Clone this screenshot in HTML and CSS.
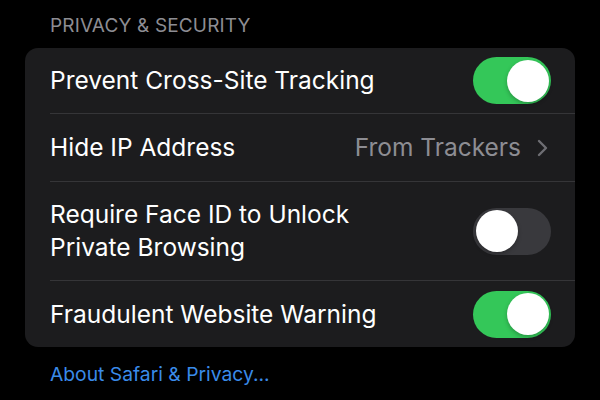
FILE: index.html
```html
<!DOCTYPE html>
<html>
<head>
<meta charset="utf-8">
<link rel="stylesheet" href="styles.css">
</head>
<body>
<div class="page">
  <div class="section-title">PRIVACY &amp; SECURITY</div>
  <div class="card">
    <div class="row first">
      <div class="label">Prevent Cross-Site Tracking</div>
      <div class="toggle on"><div class="knob"></div></div>
    </div>
    <div class="row">
      <div class="label">Hide IP Address</div>
      <div class="value">From Trackers
        <svg class="chev" width="11" height="18" viewBox="0 0 11 18"><path d="M2 2 L9 9 L2 16" fill="none" stroke="#6e6e73" stroke-width="2.4" stroke-linecap="round" stroke-linejoin="round"/></svg>
      </div>
    </div>
    <div class="row tall">
      <div class="label">Require Face ID to Unlock<br>Private Browsing</div>
      <div class="toggle"><div class="knob"></div></div>
    </div>
    <div class="row last">
      <div class="label">Fraudulent Website Warning</div>
      <div class="toggle on"><div class="knob"></div></div>
    </div>
  </div>
  <div class="link">About Safari &amp; Privacy...</div>
</div>
</body>
</html>
```
FILE: styles.css
```css
html, body {
  margin: 0;
  padding: 0;
  background: #000;
}
.page {
  width: 600px;
  height: 400px;
  overflow: hidden;
  font-family: Inter, "Noto Sans", sans-serif;
  background: #000;
  padding: 14px 25px 0 25px;
  box-sizing: border-box;
}
.section-title {
  color: #8d8d93;
  font-size: 19px;
  line-height: 24px;
  padding-left: 25px;
  margin-bottom: 10px;
  letter-spacing: 0.15px;
}
.card {
  background: #1c1c1e;
  border-radius: 13px;
  padding-left: 25px;
}
.row {
  display: flex;
  align-items: center;
  justify-content: space-between;
  min-height: 68px;
  padding-right: 24px;
  border-bottom: 1px solid #353538;
  box-sizing: border-box;
}
.row.first {
  min-height: 66px;
}
.row.tall {
  min-height: 99px;
}
.row.last {
  border-bottom: none;
  min-height: 66px;
}
.label {
  color: #fff;
  font-size: 24.5px;
  line-height: 33px;
}
.value {
  display: flex;
  align-items: center;
  gap: 16px;
  color: #8d8d93;
  font-size: 24.5px;
  line-height: 33px;
  margin-right: 3px;
}
.toggle {
  width: 78px;
  height: 47px;
  border-radius: 24px;
  background: #39393d;
  position: relative;
  flex-shrink: 0;
}
.toggle.on {
  background: #34c759;
}
.knob {
  position: absolute;
  top: 2.5px;
  left: 2.5px;
  width: 42px;
  height: 42px;
  border-radius: 50%;
  background: #fff;
  box-shadow: 0 2px 4px rgba(0,0,0,0.25);
}
.toggle.on .knob {
  left: auto;
  right: 2.5px;
}
.link {
  color: #3a8be9;
  font-size: 19.3px;
  line-height: 26px;
  padding-left: 25px;
  margin-top: 14px;
}
```
